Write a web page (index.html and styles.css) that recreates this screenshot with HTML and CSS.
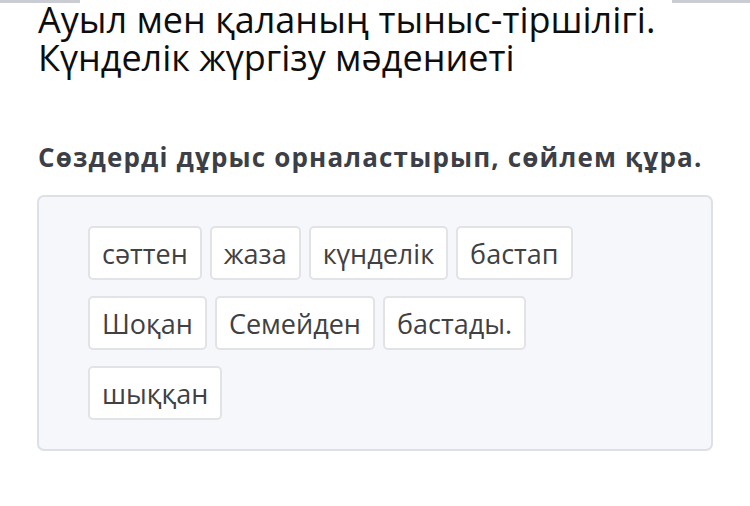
FILE: index.html
```html
<!DOCTYPE html>
<html lang="kk">
<head>
<meta charset="utf-8">
<link rel="stylesheet" href="styles.css">
</head>
<body>
<div class="topbar topbar-left"></div>
<div class="topbar topbar-right"></div>
<main class="page">
  <h1 class="title">Ауыл мен қаланың тыныс-тіршілігі.<br>Күнделік жүргізу мәдениеті</h1>
  <h2 class="task">Сөздерді дұрыс орналастырып, сөйлем құра.</h2>
  <div class="box">
    <div class="row">
      <span class="chip">сәттен</span>
      <span class="chip">жаза</span>
      <span class="chip">күнделік</span>
      <span class="chip">бастап</span>
    </div>
    <div class="row">
      <span class="chip">Шоқан</span>
      <span class="chip">Семейден</span>
      <span class="chip">бастады.</span>
    </div>
    <div class="row">
      <span class="chip">шыққан</span>
    </div>
  </div>
</main>
</body>
</html>
```

FILE: styles.css
```css
html, body {
  margin: 0;
  padding: 0;
  background: #ffffff;
}
body {
  font-family: "Open Sans", "Noto Sans", sans-serif;
  color: #111;
  position: relative;
  width: 750px;
  height: 506px;
  overflow: hidden;
}
.topbar {
  position: absolute;
  top: 0;
  height: 3px;
  background: #c9ccd2;
}
.topbar-left {
  left: 0;
  width: 80px;
}
.topbar-right {
  left: 672px;
  width: 78px;
}
.page {
  padding: 1px 37px 0 37px;
}
.title {
  margin: 0;
  font-weight: 400;
  font-size: 36px;
  line-height: 38px;
  color: #0d0d0d;
  padding-left: 1px;
}
.task {
  margin: 64px 0 0 0;
  font-weight: 700;
  font-size: 26px;
  line-height: 32px;
  letter-spacing: 1.15px;
  color: #3c3f47;
  padding-left: 1px;
}
.box {
  margin-top: 22px;
  width: 676px;
  box-sizing: border-box;
  background: #f5f7fb;
  border: 2px solid #dde0e5;
  border-radius: 7px;
  padding: 29px 49px 29px 49px;
  display: flex;
  flex-direction: column;
  gap: 16px;
}
.row {
  display: flex;
  gap: 8px;
}
.chip {
  display: inline-flex;
  align-items: center;
  height: 54px;
  box-sizing: border-box;
  padding: 0 12px;
  background: #ffffff;
  border: 2px solid #e1e3e7;
  border-radius: 5px;
  font-size: 27px;
  color: #414141;
}
```
